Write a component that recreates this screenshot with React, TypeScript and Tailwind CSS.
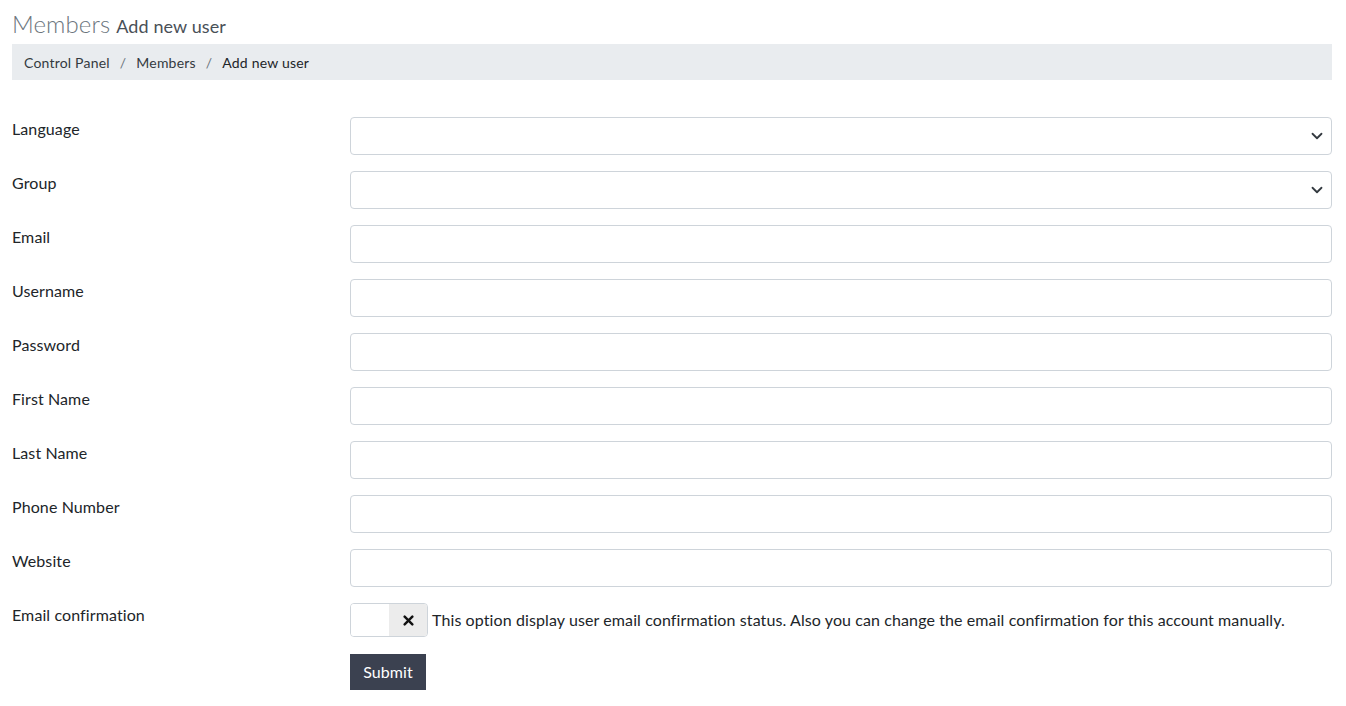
import React from 'react';

const fields = ['Email', 'Username', 'Password', 'First Name', 'Last Name', 'Phone Number', 'Website'];

const Chevron = () => (
  <svg width="12" height="12" viewBox="0 0 16 16" className="absolute right-[9px] top-1/2 -translate-y-1/2 pointer-events-none">
    <path d="M2 5l6 6 6-6" fill="none" stroke="#343a40" strokeWidth="2.4" strokeLinecap="round" strokeLinejoin="round" />
  </svg>
);

const SelectRow: React.FC<{ label: string }> = ({ label }) => (
  <div className="flex mb-4">
    <label className="w-[338px] shrink-0 leading-6">{label}</label>
    <div className="relative flex-1">
      <select className="appearance-none w-full h-[38px] border border-[#ced4da] rounded bg-white px-3" />
      <Chevron />
    </div>
  </div>
);

export default function App() {
  return (
    <div className="min-h-screen bg-white px-3 text-[16px] text-[#212529] tracking-[0.1px]" style={{ fontFamily: '"Lato", "Noto Sans", sans-serif' }}>
      <h1 className="pt-[8px] h-[44px] leading-8 flex items-baseline gap-[6px]">
        <span className="text-[24px] text-[#6c757d] font-light">Members</span>
        <span className="text-[18px] text-[#495057]">Add new user</span>
      </h1>

      <nav className="w-[1320px] h-[36px] bg-[#e9ecef] flex items-center px-3 text-[14px] text-[#343a40] tracking-[0.2px]">
        <span>Control Panel</span>
        <span className="px-[10px] text-[#6c757d]">/</span>
        <span>Members</span>
        <span className="px-[10px] text-[#6c757d]">/</span>
        <span className="text-[#212529]">Add new user</span>
      </nav>

      <form className="w-[1320px] pt-[37px]">
        <SelectRow label="Language" />
        <SelectRow label="Group" />
        {fields.map((f) => (
          <div key={f} className="flex mb-4">
            <label className="w-[338px] shrink-0 leading-6">{f}</label>
            <input
              type={f === 'Password' ? 'password' : 'text'}
              className="flex-1 h-[38px] border border-[#ced4da] rounded bg-white px-3"
            />
          </div>
        ))}

        <div className="flex">
          <label className="w-[338px] shrink-0 leading-6">Email confirmation</label>
          <div className="flex items-center gap-[4px]">
            <div className="flex w-[78px] h-[34px] border border-[#ced4da] rounded overflow-hidden">
              <div className="w-[38px] bg-white" />
              <div className="flex-1 bg-[#ececec] flex items-center justify-center">
                <svg width="11" height="11" viewBox="0 0 10 10">
                  <path d="M1.5 1.5l7 7M8.5 1.5l-7 7" stroke="#111" strokeWidth="2.2" strokeLinecap="round" />
                </svg>
              </div>
            </div>
            <span className="text-[#212529] leading-6">
              This option display user email confirmation status. Also you can change the email confirmation for this account manually.
            </span>
          </div>
        </div>

        <div className="pl-[338px] pt-[17px]">
          <button type="button" className="w-[76px] h-[36px] bg-[#3b4150] text-white">
            Submit
          </button>
        </div>
      </form>
    </div>
  );
}
